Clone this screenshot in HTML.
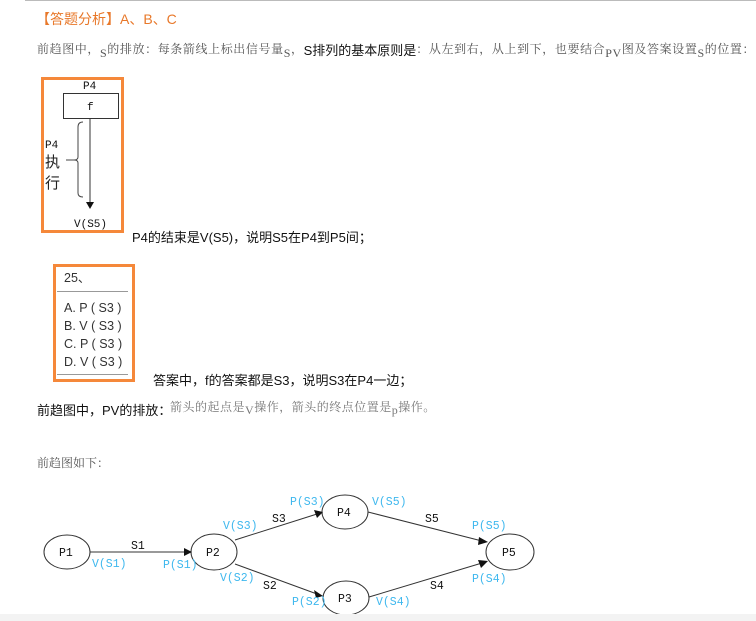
<!DOCTYPE html>
<html><head><meta charset="utf-8"><style>
body{margin:0;width:756px;height:621px;background:#fff;position:relative;overflow:hidden;font-family:"Liberation Sans","Noto Sans CJK SC",sans-serif}
.a{position:absolute;white-space:nowrap;line-height:1}
.ser{font-family:"Liberation Serif","Noto Serif CJK SC",serif;color:#555;font-size:12px}
.sa{font-size:13px;color:#111}
</style></head><body>
<div class="a" style="left:25px;top:0;width:731px;height:1px;background:#bbb"></div>
<div class="a" style="left:36px;top:12px;font-size:14px;color:#e8782a">【答题分析】A、B、C</div>
<div class="a ser" style="left:37px;top:42px;letter-spacing:0.6px">前趋图中，<span style="position:relative;top:4px">S</span>的排放：每条箭线上标出信号量<span style="position:relative;top:4px">S</span>，<span class="sa" style="font-family:'Liberation Sans','Noto Sans CJK SC',sans-serif;position:relative;top:2px;letter-spacing:0">S排列的基本原则是</span>：从左到右，从上到下，也要结合<span style="position:relative;top:4px">PV</span>图及答案设置<span style="position:relative;top:4px">S</span>的位置：</div>

<svg class="a" style="left:0;top:0" width="756" height="621">
<rect x="42.5" y="78.5" width="80" height="153" fill="none" stroke="#f5883a" stroke-width="3"/>
<rect x="63.5" y="93.5" width="55" height="25" fill="none" stroke="#333"/>
<line x1="90" y1="118" x2="90" y2="203" stroke="#333"/>
<polygon points="86,202 94,202 90,209" fill="#111"/>
<path d="M83,122 Q78,122 78,127 L78,157 Q78,160 74,160 L66,160 M74,160 Q78,160 78,163 L78,193 Q78,197 83,197" fill="none" stroke="#444"/>
<text x="83" y="89" font-family="Liberation Mono,monospace" font-size="11" fill="#111">P4</text>
<text x="87" y="110" font-family="Liberation Mono,monospace" font-size="11" fill="#111">f</text>
<text x="45" y="148" font-family="Liberation Mono,monospace" font-size="11" fill="#111">P4</text>
<text x="45" y="167" font-family="Noto Sans CJK SC" font-size="15" fill="#222">执</text>
<text x="45" y="188" font-family="Noto Sans CJK SC" font-size="15" fill="#222">行</text>
<text x="74" y="227" font-family="Liberation Mono,monospace" font-size="11" fill="#111">V(S5)</text>

<rect x="54.5" y="265.5" width="79" height="115" fill="none" stroke="#f5883a" stroke-width="3"/>
<line x1="57" y1="291.5" x2="128" y2="291.5" stroke="#999"/>
<line x1="57" y1="374.5" x2="128" y2="374.5" stroke="#999"/>
<g font-family="Liberation Sans,sans-serif" font-size="12.5" fill="#333">
<text x="64" y="282">25、</text>
<text x="64" y="312">A. P ( S3 )</text>
<text x="64" y="330">B. V ( S3 )</text>
<text x="64" y="348">C. P ( S3 )</text>
<text x="64" y="366">D. V ( S3 )</text>
</g>

<g fill="none" stroke="#333">
<ellipse cx="67" cy="552" rx="23" ry="17"/>
<ellipse cx="214" cy="552" rx="23" ry="18"/>
<ellipse cx="345" cy="512" rx="23" ry="17"/>
<ellipse cx="346" cy="598" rx="23" ry="17"/>
<ellipse cx="510" cy="552" rx="24" ry="18"/>
<line x1="90" y1="552" x2="186" y2="552"/>
<line x1="235" y1="540" x2="317" y2="514"/>
<line x1="235" y1="564" x2="317" y2="594"/>
<line x1="368" y1="512" x2="482" y2="541"/>
<line x1="369" y1="597" x2="482" y2="563"/>
</g>
<g fill="#111">
<polygon points="192,552 184,548 184,556"/>
<polygon points="323,512 314,510 317,518"/>
<polygon points="323,596 314,590 316,598"/>
<polygon points="488,542 479,537 478,545"/>
<polygon points="488,561 478,560 481,568"/>
</g>
<g font-family="Liberation Mono,monospace" font-size="11.5" fill="#111">
<text x="59" y="556">P1</text><text x="206" y="556">P2</text><text x="337" y="516">P4</text>
<text x="338" y="602">P3</text><text x="502" y="556">P5</text>
<text x="131" y="549">S1</text><text x="272" y="522">S3</text><text x="263" y="589">S2</text>
<text x="425" y="522">S5</text><text x="430" y="589">S4</text>
</g>
<g font-family="Liberation Mono,monospace" font-size="11.5" fill="#3fb8ee">
<text x="92" y="567">V(S1)</text><text x="163" y="568">P(S1)</text>
<text x="223" y="529">V(S3)</text><text x="220" y="581">V(S2)</text>
<text x="290" y="505">P(S3)</text><text x="372" y="505">V(S5)</text>
<text x="292" y="605">P(S2)</text><text x="376" y="605">V(S4)</text>
<text x="472" y="529">P(S5)</text><text x="472" y="582">P(S4)</text>
</g>
</svg>

<div class="a sa" style="left:132px;top:231px">P4的结束是V(S5)，说明S5在P4到P5间；</div>
<div class="a sa" style="left:153px;top:374px">答案中，f的答案都是S3，说明S3在P4一边；</div>
<div class="a sa" style="left:37px;top:404px">前趋图中，PV的排放：</div>
<div class="a ser" style="left:170px;top:401px;color:#777;letter-spacing:0.5px">箭头的起点是<span style="position:relative;top:3px">V</span>操作，箭头的终点位置是<span style="position:relative;top:3px">p</span>操作。</div>
<div class="a ser" style="left:37px;top:457px">前趋图如下：</div>
<div class="a" style="left:0;top:614px;width:756px;height:7px;background:#f3f3f3"></div>
</body></html>
